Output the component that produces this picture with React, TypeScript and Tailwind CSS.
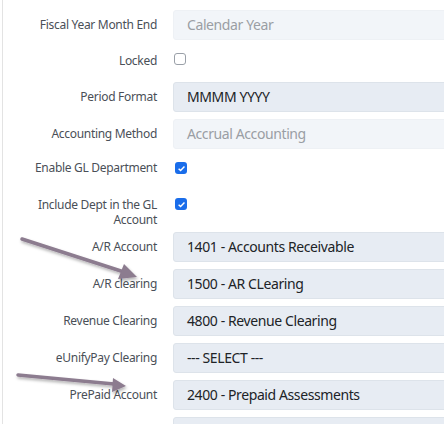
const font = "font-['Noto_Sans','Open_Sans',sans-serif]";

function Label({ children, tall = false }: { children: React.ReactNode; tall?: boolean }) {
  return (
    <div
      className={`w-[154px] shrink-0 text-right text-[12px] tracking-[-0.3px] text-[#4a4f57] ${
        tall ? "leading-[15px]" : "leading-[14px]"
      }`}
    >
      {children}
    </div>
  );
}

function Field({ label, value, muted = false }: { label: string; value: string; muted?: boolean }) {
  return (
    <div className="flex h-[30px] items-center gap-4">
      <Label>{label}</Label>
      <div
        className={`flex h-[30px] flex-1 items-center rounded-[3px] border pb-[1px] pl-[13px] text-[14px] tracking-[-0.4px] ${
          muted
            ? "border-[#eef1f5] bg-[#f2f5f9] text-[#9a9ea4]"
            : "border-[#dde3ea] bg-[#e7ecf3] text-[#202327]"
        }`}
      >
        {value}
      </div>
    </div>
  );
}

function Check({ checked }: { checked: boolean }) {
  return checked ? (
    <span className="ml-[2px] flex h-[12px] w-[12px] shrink-0 items-center justify-center rounded-[3px] bg-[#1a6dea]">
      <svg width="9" height="9" viewBox="0 0 10 10">
        <path d="M1.8 5.2 L4 7.3 L8.3 2.8" fill="none" stroke="white" strokeWidth="1.6" />
      </svg>
    </span>
  ) : (
    <span className="ml-[2px] block h-[12px] w-[12px] shrink-0 rounded-[3px] border border-[#9aa0a8] bg-white" />
  );
}

export default function App() {
  return (
    <div className={`relative h-[424px] w-[444px] overflow-hidden bg-white ${font}`}>
      <div className="ml-[2px] h-full border-l border-[#e3e3e3] pt-[10px]">
        <div className="-mr-8 flex flex-col gap-[7px]">
          <Field label="Fiscal Year Month End" value="Calendar Year" muted />
          <div className="flex h-[28px] items-center gap-4">
            <Label>Locked</Label>
            <div className="-mt-[4px] -ml-[1px]">
              <Check checked={false} />
            </div>
          </div>
          <Field label="Period Format" value="MMMM YYYY" />
          <Field label="Accounting Method" value="Accrual Accounting" muted />
          <div className="flex h-[24px] items-center gap-4">
            <Label>Enable GL Department</Label>
            <Check checked />
          </div>
          <div className="flex h-[38px] items-start gap-4 pt-[10px]">
            <Label tall>
              Include Dept in the GL
              <br />
              Account
            </Label>
            <div className="mt-[1px]">
              <Check checked />
            </div>
          </div>
          <Field label="A/R Account" value="1401 - Accounts Receivable" />
          <Field label="A/R clearing" value="1500 - AR CLearing" />
          <Field label="Revenue Clearing" value="4800 - Revenue Clearing" />
          <Field label="eUnifyPay Clearing" value="--- SELECT ---" />
          <Field label="PrePaid Account" value="2400 - Prepaid Assessments" />
          <Field label="" value="" />
        </div>
      </div>

      {/* annotation arrows */}
      <svg className="pointer-events-none absolute inset-0" width="444" height="424">
        <defs>
          <filter id="sh" x="-20%" y="-50%" width="140%" height="200%">
            <feDropShadow dx="1" dy="2" stdDeviation="1.5" floodColor="#000" floodOpacity="0.3" />
          </filter>
        </defs>
        <g filter="url(#sh)" fill="#8c7b8f" stroke="#8c7b8f" strokeLinecap="round">
          <line x1="22" y1="239" x2="124" y2="272" strokeWidth="3.5" />
          <polygon points="137,277 118,279 124,264" stroke="none" />
          <line x1="18" y1="375" x2="114" y2="384" strokeWidth="3.5" />
          <polygon points="126,386 112,392 113,378" stroke="none" />
        </g>
      </svg>
    </div>
  );
}
